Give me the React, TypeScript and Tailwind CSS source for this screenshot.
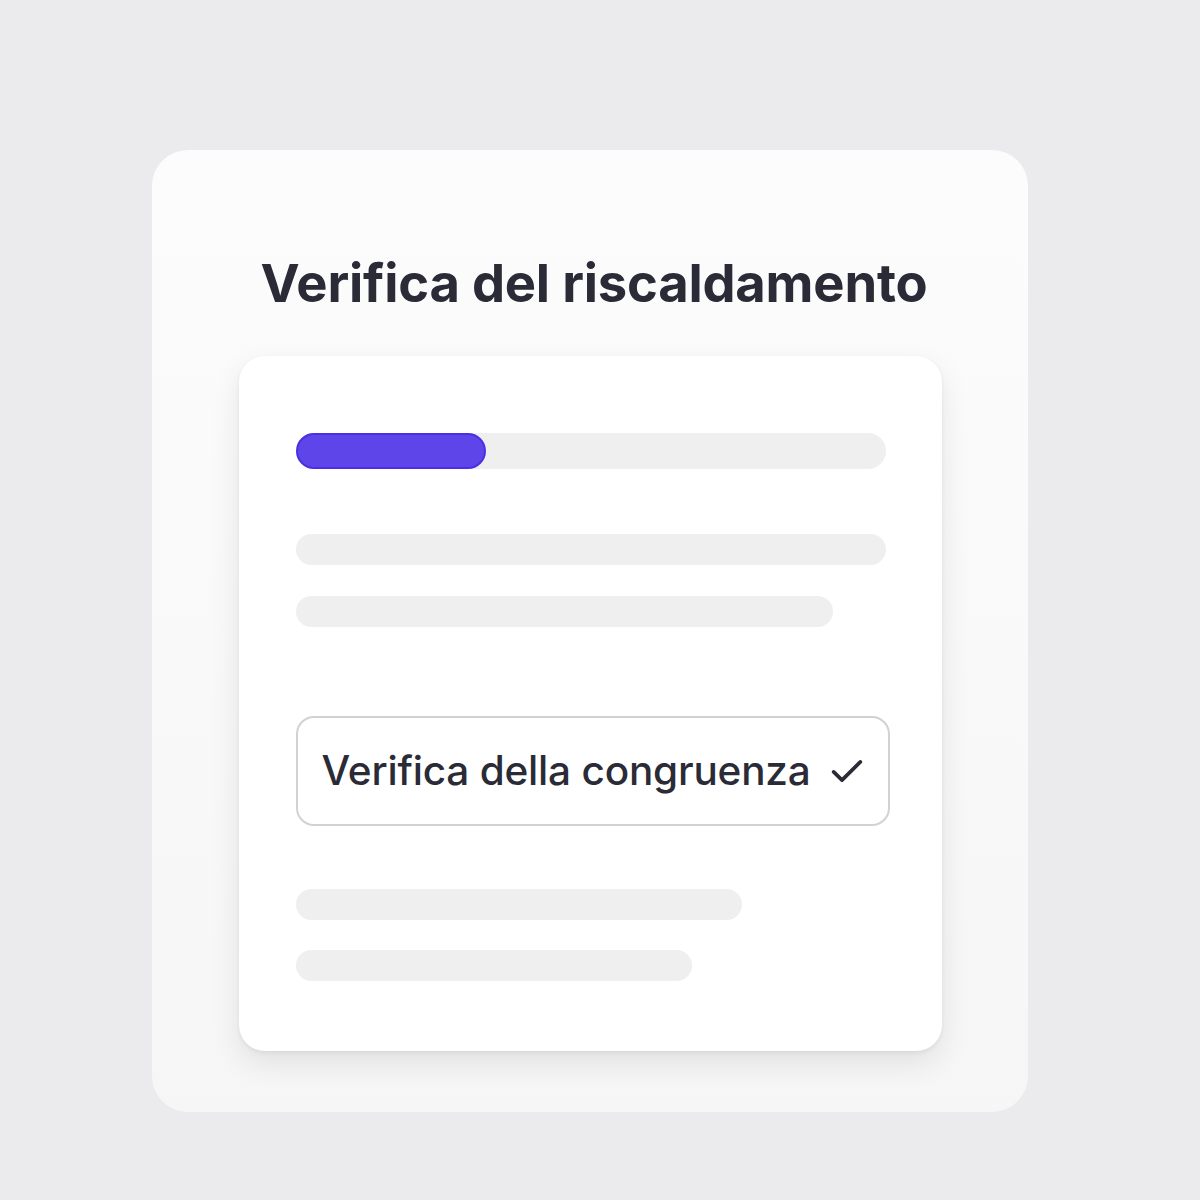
export default function App() {
  return (
    <div className="w-[1200px] h-[1200px] bg-[#ebebed] flex items-start pl-[152px] pt-[150px] font-['Inter',sans-serif]">
      <div className="w-[876px] h-[962px] rounded-[36px] bg-gradient-to-b from-[#fcfcfd] to-[#f6f6f7] flex flex-col items-center">
        <h1 className="mt-[102px] text-[52.5px] leading-[62px] font-bold text-[#2a2b36] tracking-[-0.2px] translate-x-[4px]">
          Verifica del riscaldamento
        </h1>
        <div className="mt-[42px] w-[703px] h-[695px] bg-white rounded-[26px] shadow-[0_12px_30px_rgba(0,0,0,0.09),0_2px_4px_rgba(0,0,0,0.06)] px-[57px] pt-[77px]">
          {/* progress */}
          <div className="w-[590px] h-[36px] rounded-full bg-[#efeff0]">
            <div className="w-[190px] h-[36px] rounded-full bg-[#5d45ea] border-2 border-[#4a30e2]" />
          </div>
          <div className="mt-[65px] w-[590px] h-[31px] rounded-full bg-[#efeff0]" />
          <div className="mt-[31px] w-[537px] h-[31px] rounded-full bg-[#efeff0]" />
          <div className="mt-[89px] w-[594px] h-[110px] rounded-[18px] border-2 border-[#d2d2d6] flex items-center pl-[24px] gap-[16px]">
            <span className="text-[40.5px] font-medium text-[#2a2b36] tracking-[-0.2px]">Verifica della congruenza</span>
            <svg width="40" height="40" viewBox="0 0 24 24" fill="none" stroke="#2a2b36" strokeWidth="2.2" strokeLinecap="round" strokeLinejoin="round">
              <path d="M4 12.5l5 5L20 6.5" />
            </svg>
          </div>
          <div className="mt-[63px] w-[446px] h-[31px] rounded-full bg-[#efeff0]" />
          <div className="mt-[30px] w-[396px] h-[31px] rounded-full bg-[#efeff0]" />
        </div>
      </div>
    </div>
  )
}
